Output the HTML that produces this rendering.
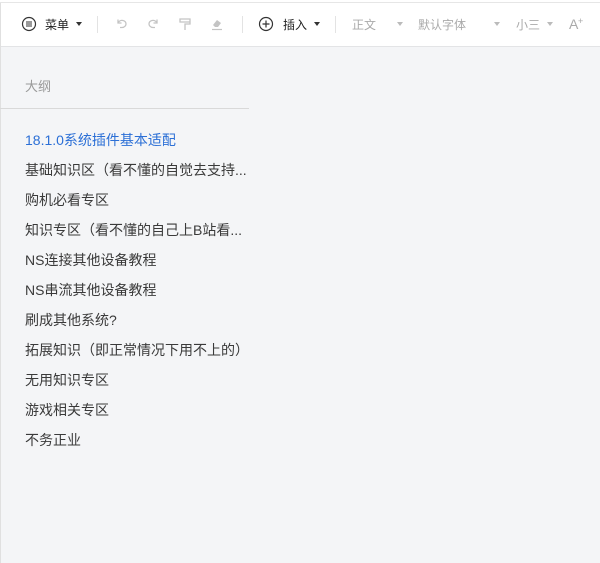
<!DOCTYPE html>
<html><head><meta charset="utf-8"><style>
*{margin:0;padding:0;box-sizing:border-box}
body{width:600px;height:563px;overflow:hidden;background:#f4f5f7;font-family:"Liberation Sans","Noto Sans CJK SC",sans-serif;position:relative}
.top{position:absolute;left:0;top:0;width:600px;height:3px;background:#fff;border-bottom:1px solid #e6e6e6}
.bar{position:absolute;left:0;top:3px;width:600px;height:44px;background:#fff;border-bottom:1px solid #e3e4e6}
.lb{position:absolute;left:0;top:3px;width:1px;height:560px;background:#e0e0e0}
.t{position:absolute;font-size:12px;top:17px;line-height:16px}
.sep{position:absolute;top:16px;width:1px;height:17px;background:#e3e3e3}
.tri{position:absolute;top:22px;width:0;height:0;border-left:3px solid transparent;border-right:3px solid transparent;border-top:4px solid #333}
.tri.g{border-top-color:#bbb}
svg{position:absolute}
.hd{position:absolute;left:25px;top:79px;font-size:13px;line-height:16px;color:#999}
.hl{position:absolute;left:0;top:108px;width:249px;height:1px;background:#d9d9d9}
.it{position:absolute;left:25px;font-size:14px;color:#3a3a3a;line-height:16px}
</style></head><body>
<div class="top"></div>
<div class="bar"></div>
<div class="lb"></div>
<svg style="left:21px;top:16px" width="16" height="16" viewBox="0 0 16 16"><circle cx="8" cy="8" r="6.5" fill="none" stroke="#333" stroke-width="1.2"/><path d="M5 6h6M5 8h6M5 10h6" stroke="#333" stroke-width="1.1"/></svg>
<div class="t" style="left:45px;color:#222">菜单</div>
<div class="tri" style="left:76px"></div>
<div class="sep" style="left:97px"></div>
<svg style="left:115px;top:17px" width="14" height="14" viewBox="0 0 14 14"><path d="M3 2.5v3.5h3.5M3 6c1-2 3-3 5-2.5 2 .5 3 2 3 3.5s-1.5 3.5-4 3.5H5" fill="none" stroke="#c4c4c4" stroke-width="1.3"/></svg>
<svg style="left:146px;top:17px" width="14" height="14" viewBox="0 0 14 14"><path d="M11 2.5v3.5H7.5M11 6c-1-2-3-3-5-2.5C4 4 3 5.5 3 7s1.5 3.5 4 3.5h2" fill="none" stroke="#c4c4c4" stroke-width="1.3"/></svg>
<svg style="left:178px;top:17px" width="14" height="14" viewBox="0 0 14 14"><path d="M2 2h10v3H2zM12 4v3H7v6" fill="none" stroke="#c4c4c4" stroke-width="1.3"/></svg>
<svg style="left:210px;top:17px" width="14" height="14" viewBox="0 0 14 14"><path d="M3 8l4-5 4 3-3 4H5z" fill="#c4c4c4"/><path d="M2 12.5h10" stroke="#c4c4c4" stroke-width="1.2"/></svg>
<div class="sep" style="left:242px"></div>
<svg style="left:258px;top:16px" width="16" height="16" viewBox="0 0 16 16"><circle cx="8" cy="8" r="6.5" fill="none" stroke="#333" stroke-width="1.2"/><path d="M8 4.5v7M4.5 8h7" stroke="#333" stroke-width="1.2"/></svg>
<div class="t" style="left:283px;color:#222">插入</div>
<div class="tri" style="left:314px"></div>
<div class="sep" style="left:335px"></div>
<div class="t" style="left:352px;color:#aaa">正文</div>
<div class="tri g" style="left:397px"></div>
<div class="t" style="left:418px;color:#aaa">默认字体</div>
<div class="tri g" style="left:494px"></div>
<div class="t" style="left:516px;color:#aaa">小三</div>
<div class="tri g" style="left:547px"></div>
<div class="t" style="left:569px;top:16px;color:#aaa;font-size:14px">A</div>
<div class="t" style="left:578px;top:13px;color:#aaa;font-size:9px">+</div>
<div class="hd">大纲</div>
<div class="hl"></div>
<div class="it" style="top:132px;color:#2b6fd6">18.1.0系统插件基本适配</div>
<div class="it" style="top:162px">基础知识区（看不懂的自觉去支持...</div>
<div class="it" style="top:192px">购机必看专区</div>
<div class="it" style="top:222px">知识专区（看不懂的自己上B站看...</div>
<div class="it" style="top:252px">NS连接其他设备教程</div>
<div class="it" style="top:282px">NS串流其他设备教程</div>
<div class="it" style="top:312px">刷成其他系统?</div>
<div class="it" style="top:342px">拓展知识（即正常情况下用不上的）</div>
<div class="it" style="top:372px">无用知识专区</div>
<div class="it" style="top:402px">游戏相关专区</div>
<div class="it" style="top:432px">不务正业</div>
</body></html>
